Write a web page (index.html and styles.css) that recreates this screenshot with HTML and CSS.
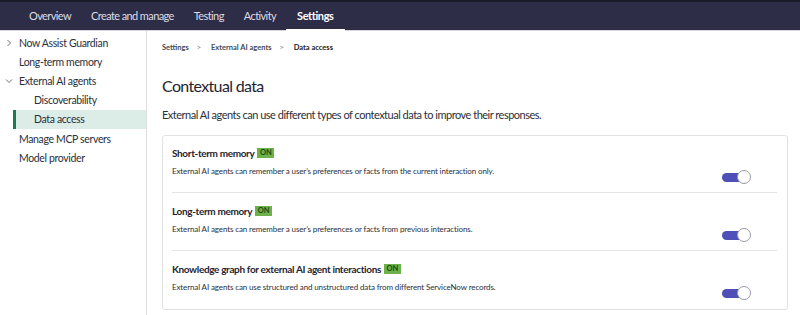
FILE: index.html
```html
<!DOCTYPE html>
<html lang="en">
<head>
  <meta charset="UTF-8" />
  <title>Settings - Data access</title>
  <link rel="stylesheet" href="styles.css">
</head>
<body>
  <!-- top tabs -->
  <div class="topbar">
    <div class="tab">Overview</div>
    <div class="tab">Create and manage</div>
    <div class="tab">Testing</div>
    <div class="tab">Activity</div>
    <div class="tab active">Settings</div>
  </div>

  <div class="layout">
    <!-- side menu -->
    <div class="sidebar">
      <div class="item">
        <svg class="chev" width="8" height="8" viewBox="0 0 8 8"><polyline points="2.5,1 5.5,4 2.5,7" /></svg>
        Now Assist Guardian
      </div>
      <div class="item">Long-term memory</div>
      <div class="item">
        <svg class="chev" width="8" height="8" viewBox="0 0 8 8"><polyline points="1,2.5 4,5.5 7,2.5" /></svg>
        External AI agents
      </div>
      <div class="item sub">Discoverability</div>
      <div class="item sub selected">Data access</div>
      <div class="item">Manage MCP servers</div>
      <div class="item">Model provider</div>
    </div>

    <!-- content -->
    <div class="main">
      <div class="crumbs">
        <span>Settings</span><span class="sep">&gt;</span>
        <span>External AI agents</span><span class="sep">&gt;</span>
        <span class="cur">Data access</span>
      </div>
      <h1>Contextual data</h1>
      <p class="intro">External AI agents can use different types of contextual data to improve their responses.</p>

      <div class="card">
        <div class="row">
          <div class="text">
            <div class="title">Short-term memory <span class="badge">ON</span></div>
            <div class="desc">External AI agents can remember a user’s preferences or facts from the current interaction only.</div>
          </div>
          <div class="toggle"></div>
        </div>
        <div class="row">
          <div class="text">
            <div class="title">Long-term memory <span class="badge">ON</span></div>
            <div class="desc">External AI agents can remember a user’s preferences or facts from previous interactions.</div>
          </div>
          <div class="toggle"></div>
        </div>
        <div class="row">
          <div class="text">
            <div class="title">Knowledge graph for external AI agent interactions <span class="badge">ON</span></div>
            <div class="desc">External AI agents can use structured and unstructured data from different ServiceNow records.</div>
          </div>
          <div class="toggle"></div>
        </div>
      </div>
    </div>
  </div>
</body>
</html>
```

FILE: styles.css
```css
html, body {
  margin: 0;
  padding: 0;
  height: 100%;
  overflow: hidden;
  font-family: Lato, "Open Sans", sans-serif;
  color: #1f2430;
  background: #fff;
}

.topbar {
  display: flex;
  height: 28px;
  padding-left: 19px;
  background: #2e2d48;
  border-top: 2px solid #1c1c28;
  border-bottom: 1px solid #d6d6dc;
}
.tab {
  display: flex;
  align-items: center;
  padding: 0 10px;
  font-size: 11px;
  letter-spacing: -0.6px;
  color: #dcdce4;
  border-bottom: 2px solid transparent;
  margin-bottom: -1px;
}
.tab.active {
  color: #fff;
  font-weight: bold;
  letter-spacing: -0.4px;
  padding: 0 11px;
  border-bottom-color: #fff;
}

.layout {
  display: flex;
  height: calc(100% - 31px);
}

.sidebar {
  width: 146px;
  padding-top: 2px;
  border-right: 1px solid #dedede;
  flex-shrink: 0;
}
.item {
  display: flex;
  align-items: center;
  height: 19.2px;
  padding-left: 19px;
  font-size: 10.5px;
  letter-spacing: -0.35px;
  color: #2a2f3a;
  position: relative;
}
.item.sub { padding-left: 34px; }
.item.selected {
  background: #dcede8;
  box-shadow: inset 3px 0 0 #1e7a55;
  margin-left: 13px;
  padding-left: 21px;
}
.chev {
  position: absolute;
  left: 5px;
  top: 6px;
  fill: none;
  stroke: #6b6f78;
  stroke-width: 1;
}

.main {
  flex: 1;
  padding: 12px 12px 0 15px;
}
.crumbs {
  font-size: 7.5px;
  font-weight: bold;
  color: #444a55;
  height: 12px;
}
.crumbs .sep {
  margin: 0 8px;
  font-weight: normal;
  color: #777;
}
.crumbs .cur { color: #1a1d24; }

h1 {
  margin: 21px 0 0;
  font-size: 16px;
  letter-spacing: -0.65px;
  font-weight: normal;
  color: #1f2430;
}
.intro {
  margin: 13px 0 0;
  font-size: 11px;
  letter-spacing: -0.5px;
  color: #2a2f3a;
}

.card {
  margin-top: 14px;
  border: 1px solid #e2e2e2;
  border-radius: 3px;
  padding: 0 10px 0 9px;
}
.row {
  display: flex;
  height: 58px;
  box-sizing: border-box;
  padding-top: 12px;
  border-bottom: 1px solid #e4e4e4;
}
.row:first-child { height: 57px; padding-top: 11px; }
.row:last-child { border-bottom: none; height: 58px; }
.text { flex: 1; }
.title {
  font-size: 10px;
  letter-spacing: -0.35px;
  font-weight: bold;
  color: #1f2430;
  display: flex;
  align-items: center;
  gap: 3px;
  height: 12px;
}
.badge {
  background: #6cb14a;
  color: #1d4a12;
  font-size: 7.5px;
  letter-spacing: 0;
  font-weight: bold;
  padding: 1px 2.5px;
  line-height: 8px;
}
.desc {
  margin-top: 7px;
  font-size: 8px;
  letter-spacing: -0.12px;
  color: #2a2f3a;
}
.toggle {
  position: relative;
  align-self: flex-start;
  width: 23px;
  height: 9px;
  margin-top: 26px;
  margin-right: 32px;
  background: #4e50b8;
  border-radius: 5px;
}
.toggle::after {
  content: '';
  position: absolute;
  right: -6px;
  top: -3px;
  width: 14px;
  height: 14px;
  border-radius: 50%;
  background: #fff;
  border: 1px solid #9a9aa8;
  box-sizing: border-box;
}
```
